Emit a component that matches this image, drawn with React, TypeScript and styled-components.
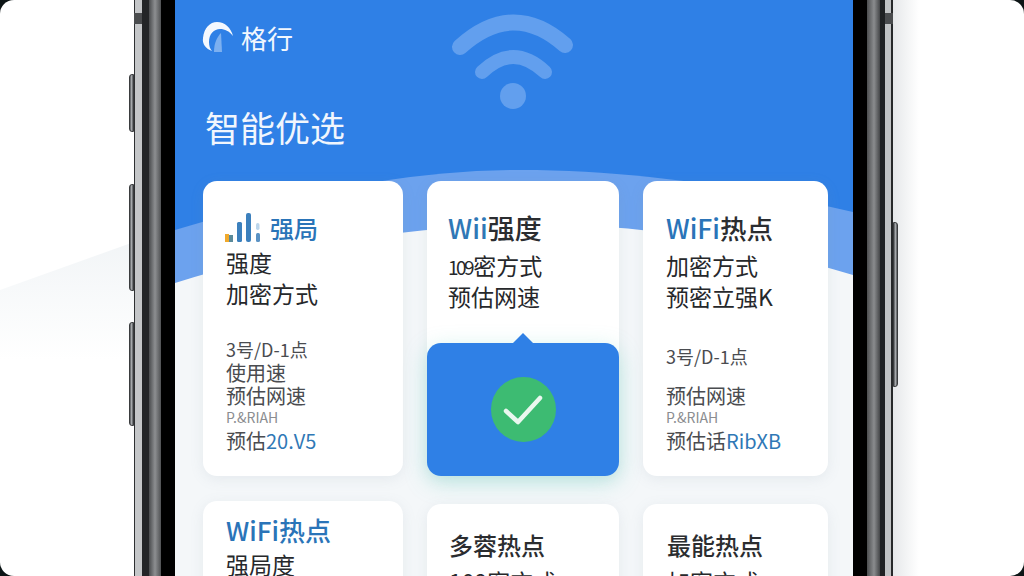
import React from "react";
import styled, { createGlobalStyle } from "styled-components";

const Global = createGlobalStyle`
  html, body { margin: 0; padding: 0; background: #0d1516; }
  body { width: 1024px; height: 576px; overflow: hidden; font-family: "Noto Sans CJK SC", "Noto Sans", sans-serif; }
`;
const Page = styled.div`
  width: 1024px; height: 576px; border-radius: 14px; overflow: hidden;
  background: #fff; display: flex; position: relative;
  padding-left: 134px; box-sizing: border-box;
`;
const Backdrop = styled.svg`position: absolute; inset: 0; width: 1024px; height: 576px;`;
const SideButton = styled.div<{ $top: number; $h: number; $right?: boolean }>`
  position: absolute; top: ${p => p.$top}px; height: ${p => p.$h}px; width: 5px;
  ${p => p.$right ? "left: 759px; border-radius: 0 3px 3px 0;" : "left: -5px; border-radius: 3px 0 0 3px;"}
  background: linear-gradient(90deg, #55585b, #a5a8ab 50%, #55585b); border: 1px solid #3a3c3e; box-sizing: border-box;
`;
const Notch = styled.div<{ $right?: boolean }>`
  position: absolute; top: 13px; height: 11px; width: 8px; background: #4a4c4e;
  left: ${p => p.$right ? 751 : 0}px;
`;
const Phone = styled.div`
  position: relative; width: 759px; height: 576px; display: flex; flex: none; box-sizing: border-box;
  padding: 0 26px 0 27px;
  background: linear-gradient(90deg,
    #2e3032 0 1px, #c4c6c8 1px 8px, #232527 8px 15px, #4a4c4e 15px, #8d8f91 21px, #505254 27px,
    #000 27px 733px, #4c4e50 733px, #8a8c8e 740px, #444648 746px, #1f2123 746px 751px, #c0c2c4 751px 757px, #26282a 757px 759px);
`;
const Bezel = styled.div`flex: 1; background: #000; padding: 0 14px; display: flex; min-width: 0;`;
const Screen = styled.div`
  position: relative; flex: 1; overflow: hidden; background: #f4f7f9;
  padding: 18px 0 0 28px; box-sizing: border-box; min-width: 0;
`;
const Wave = styled.svg`position: absolute; left: 0; top: 0; width: 678px; height: 576px;`;
const WifiMark = styled.svg`position: absolute; left: 270px; top: 12px; width: 136px; height: 100px;`;
const Content = styled.div`position: relative; display: flex; flex-direction: column;`;
const Brand = styled.div`
  display: flex; align-items: center; gap: 7px; height: 40px; margin-left: -2px;
  color: #f2f7fe; font-size: 26px; line-height: 40px;
`;
const Heading = styled.h1`
  margin: 44px 0 0 2px; color: #f1f6fd; font-size: 35px; font-weight: 400; line-height: 50px; letter-spacing: 0;
`;
const Grid = styled.div`
  display: grid; grid-template-columns: 200px 192px 185px; column-gap: 24px; row-gap: 28px;
  grid-auto-rows: 295px; margin-top: 29px;
`;
const Card = styled.div<{ $pad?: number; $top?: number; $shift?: number }>`
  position: relative; background: #fff; border-radius: 14px; box-sizing: border-box;
  padding: ${p => p.$top ?? 28}px 0 0 ${p => p.$pad ?? 23}px;
  margin-top: ${p => p.$shift ?? 0}px;
  box-shadow: 0 3px 14px rgba(120, 140, 160, 0.12); color: #26282b; min-width: 0;
`;
const TitleRow = styled.div`display: flex; align-items: center; gap: 10px; height: 38px;`;
const Title = styled.div<{ $dark?: boolean; $size?: number }>`
  font-size: ${p => p.$size ?? 24}px; line-height: 38px; font-weight: 500;
  color: ${p => p.$dark ? "#2b2d30" : "#2a74b8"}; white-space: nowrap;
`;
const Dark = styled.span`color: #2b2d30;`;
const Squeezed = styled.span`font-size: 19px; line-height: 1; letter-spacing: -2.5px; margin-right: 1px;`;
const Line = styled.div<{ $gap?: number }>`
  font-size: 23px; line-height: 31px; color: #26282b; white-space: nowrap; margin-top: ${p => p.$gap ?? 0}px;
`;
const Small = styled.div<{ $gap?: number; $size?: number }>`
  font-size: ${p => p.$size ?? 20}px; line-height: 23px;
  color: #4a4c50; white-space: nowrap; margin-top: ${p => p.$gap ?? 0}px;
`;
const Tiny = styled.div`
  font-size: 14px; line-height: 14px; color: #8b8d90; white-space: nowrap; margin: 3px 0 5px;
`;
const Accent = styled.span`color: #2f78b6;`;
const Popup = styled.div`
  position: absolute; left: 0; right: 0; bottom: 0; height: 133px; background: #2f80e6; border-radius: 14px;
  display: flex; align-items: center; justify-content: center;
  box-shadow: 0 6px 22px rgba(90, 210, 190, 0.35);
  &::before {
    content: ""; position: absolute; top: -10px; left: 50%; margin-left: -10px;
    border-left: 10px solid transparent; border-right: 10px solid transparent; border-bottom: 10px solid #2f80e6;
  }
`;
const Check = styled.div`width: 65px; height: 65px; border-radius: 50%; background: #3dbb72; display: flex; align-items: center; justify-content: center;`;

const Logo = () => (
  <svg width="33" height="32" viewBox="0 0 33 32">
    <path d="M2 16C3 6 9 0 16 0C24 0 30 6 32 14C28 9 24 7 19 7C13 7 8 12 8 20C8 24 9 27 11 29C5 27 1 22 2 16Z" fill="#f4f8fe" />
    <path d="M13 30C13 21 16 15 20 11L21 30Z" fill="#7db0f0" />
  </svg>
);
const Bars = () => (
  <svg width="35" height="32" viewBox="0 0 35 32" style={{ marginLeft: -1 }}>
    <rect x="0" y="22" width="4" height="8" fill="#f0a92c" />
    <rect x="4" y="23" width="4" height="7" fill="#5a8a9a" />
    <rect x="12" y="10" width="5" height="20" rx="1.5" fill="#3c80bd" />
    <rect x="21" y="1" width="5" height="29" rx="2" fill="#3c80bd" />
    <rect x="31" y="11" width="3.5" height="7" rx="1.7" fill="#bcd6ec" />
    <rect x="31" y="21" width="4" height="9" rx="1.5" fill="#5a92c4" />
  </svg>
);

export default function App() {
  return (
    <Page>
      <Global />
      <Backdrop viewBox="0 0 1024 576" aria-hidden>
        <defs>
          <linearGradient id="leftShade" x1="0" y1="0" x2="0" y2="1">
            <stop offset="0" stopColor="#f2f5f7" />
            <stop offset="1" stopColor="#ffffff" />
          </linearGradient>
          <linearGradient id="rightShade" x1="0" y1="0" x2="1" y2="0">
            <stop offset="0" stopColor="#e6e8ea" />
            <stop offset="1" stopColor="#ffffff" />
          </linearGradient>
        </defs>
        <path d="M0 290L134 242V360H0Z" fill="url(#leftShade)" />
        <rect x="893" y="0" width="26" height="576" fill="url(#rightShade)" />
      </Backdrop>
      <Phone>
        <Bezel>
          <Screen>
            <Wave viewBox="0 0 678 576" aria-hidden>
              <rect width="678" height="300" fill="#2f80e6" />
              <path d="M0 230C100 200 220 170 345 170C470 170 580 190 678 212V300H0Z" fill="#6ca2ee" />
              <path d="M0 283C90 255 190 228 345 225C460 222 560 240 678 275V576H0Z" fill="#f4f7f9" />
            </Wave>
            <WifiMark viewBox="0 0 136 100" aria-hidden fill="none" stroke="#629fee" strokeLinecap="round">
              <path d="M15 35Q68 -13 120 33" strokeWidth="16" />
              <path d="M37 60Q68 30 100 60" strokeWidth="14" />
              <circle cx="68" cy="84" r="13" fill="#629fee" stroke="none" />
            </WifiMark>
            <Content>
              <Brand><Logo />格行</Brand>
              <Heading>智能优选</Heading>
              <Grid>
                <Card>
                  <TitleRow><Bars /><Title>强局</Title></TitleRow>
                  <Line>强度</Line>
                  <Line>加密方式</Line>
                  <Small $gap={29} $size={18}>3号/D-1点</Small>
                  <Small>使用速</Small>
                  <Small>预估网速</Small>
                  <Tiny>P.&amp;RIAH</Tiny>
                  <Small>预估<Accent>20.V5</Accent></Small>
                </Card>
                <Card $pad={21}>
                  <Title $dark $size={27}><Accent>Wii</Accent>强度</Title>
                  <Line $gap={3}><Squeezed>109</Squeezed>密方式</Line>
                  <Line>预估网速</Line>
                  <Popup>
                    <Check>
                      <svg width="40" height="32" viewBox="0 0 40 32" fill="none" stroke="#eaf7ef" strokeWidth="4.5" strokeLinecap="round" strokeLinejoin="round">
                        <path d="M3 17L15 28L37 4" />
                      </svg>
                    </Check>
                  </Popup>
                </Card>
                <Card>
                  <Title $size={26.5}>WiFi<Dark>热点</Dark></Title>
                  <Line $gap={3}>加密方式</Line>
                  <Line>预密立强K</Line>
                  <Small $gap={33} $size={18}>3号/D-1点</Small>
                  <Small $gap={16}>预估网速</Small>
                  <Tiny>P.&amp;RIAH</Tiny>
                  <Small>预估话<Accent>RibXB</Accent></Small>
                </Card>
                <Card $top={10} $shift={-3}>
                  <Title $size={26}>WiFi热点</Title>
                  <Line>强局度</Line>
                </Card>
                <Card $pad={22} $top={22}>
                  <Title $dark>多蓉热点</Title>
                  <Line $gap={2}>109密方式</Line>
                </Card>
                <Card $pad={24} $top={22}>
                  <Title $dark>最能热点</Title>
                  <Line $gap={2}>加密方式</Line>
                </Card>
              </Grid>
            </Content>
          </Screen>
        </Bezel>
        <Notch />
        <Notch $right />
        <SideButton $top={74} $h={58} />
        <SideButton $top={184} $h={107} />
        <SideButton $top={322} $h={104} />
        <SideButton $top={222} $h={165} $right />
      </Phone>
    </Page>
  );
}
